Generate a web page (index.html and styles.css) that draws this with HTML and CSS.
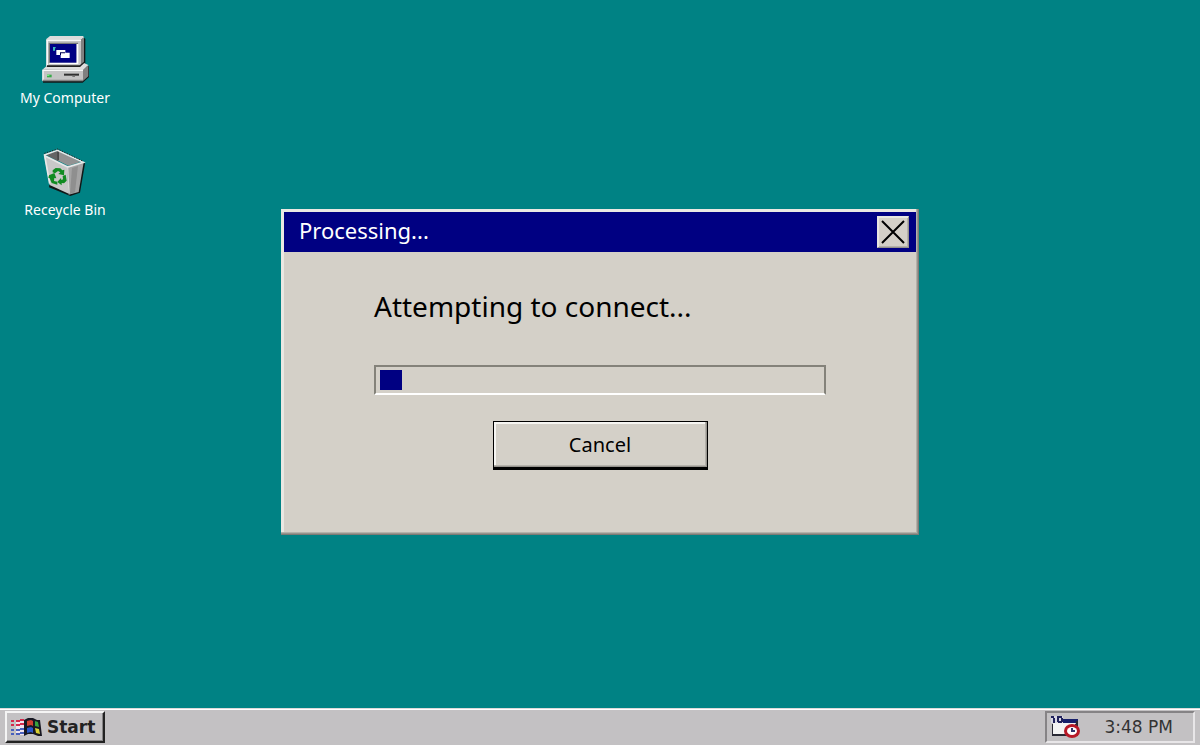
FILE: index.html
```html
<!DOCTYPE html>
<html lang="en">
<head>
  <meta charset="utf-8">
  <meta name="viewport" content="width=device-width, initial-scale=1">
  <title>Desktop</title>
  <link rel="stylesheet" href="styles.css">
</head>
<body>
  <main class="desktop">
    <!-- shortcuts -->
    <nav class="shortcuts">
      <a href="#computer" class="shortcut">
        <svg class="shortcut-icon" viewBox="90 33 150 150" aria-hidden="true">
          <path fill="#101818" d="M216 36l10 5v80l11 3v32l-19 17H99v-4l10-46z"/>
          <path fill="#808080" d="M209 47l13-10v77l-13 12zM219 134l16-13v33l-16 14z"/>
          <path fill="#dcdcdc" d="M109 42l11-9h99l3 4-13 10H109z"/>
          <path fill="#c6c6c6" d="M109 44h104v80H109z"/>
          <path fill="#f8f8f8" d="M109 44h104v4h-99v76h-5z"/>
          <path fill="#777" d="M116 53h88v4h-84v58h-4z"/>
          <path fill="#fff" d="M200 57h5v60h-87v-4h82z"/>
          <path fill="#000084" d="M120 57h79v56h-79z"/>
          <path fill="#38b9bc" d="M129 66h8v4h-2v7h-6z"/>
          <path fill="#fff" d="M139 75h27v8h13v16h-27v-9h-13z"/>
          <path fill="#000050" d="M150 82h15v3h-12v5h-3z"/>
          <path fill="#6f6f6f" d="M109 123h100l12-10v8l-10 9H109z"/>
          <path fill="#ddd" d="M97 134l12-10h100l13-10 13 6-16 15z"/>
          <path fill="#222" d="M111 121h98l13-11v5l-12 11h-99z"/>
          <path fill="#c4c4c4" d="M97 134h122v34H97z"/>
          <path fill="#f7f7f7" d="M97 134h122v4H101v30h-4z"/>
          <path fill="#848484" d="M99 164h120v5H97z"/>
          <path fill="#38aa48" d="M111 149h14v8h-14z"/>
          <path fill="#74ef83" d="M111 149h7v4h-7z"/>
          <path fill="#303030" d="M162 146h45v6h-45z"/>
          <path fill="#777" d="M187 152h8v4h-8z"/>
        </svg>
        <span>My Computer</span>
      </a>
      <a href="#bin" class="shortcut">
        <svg class="shortcut-icon" viewBox="92 24 150 150" aria-hidden="true">
          <path fill="#101818" d="M224 66l3 5-15 87-29 10-64-26 1-8 66 20z"/>
          <path fill="#c8c8c8" d="M104 44l69 38 5 79-57-26z"/>
          <path fill="#a4a4a4" d="M173 82l50-15-15 89-30 8z"/>
          <path fill="#8f8f8f" d="M188 84l18-6-9 79-15 5z"/>
          <path fill="#656565" d="M109 44l35-11 5 31-6-2z"/>
          <path fill="#929292" d="M145 32l69 34-37 11-30-15z"/>
          <path fill="#4a4a4a" d="M143 31h6v29l-5 2z"/>
          <path fill="none" stroke="#e8e8e8" stroke-width="5" d="M105 45l39-14 78 36-47 14-69-34 15 84"/>
          <path fill="none" stroke="#252525" stroke-width="3" stroke-dasharray="4 4" d="M105 40l40-13 77 37"/>
          <path fill="none" stroke="#d5d5d5" stroke-width="4" d="M175 84l4 76"/>
          <g fill="#108b22">
            <path d="M130 91l9-7 14 1 6 6 6-2-1 17-17-4 6-5-7-4-9 7-7-3z"/>
            <path d="M119 106l16-7 6 16-6-1-1 9 10 2v9l-17-5-6-14-4-2z"/>
            <path d="M160 108l9-4 3 18-8 8-7-1v7l-13-10 11-12 1 6 5-2z"/>
          </g>
        </svg>
        <span>Receycle Bin</span>
      </a>
    </nav>

    <!-- connection dialog -->
    <section class="window" role="dialog" aria-labelledby="windowTitle">
      <header class="title-bar">
        <h1 class="title" id="windowTitle">Processing...</h1>
        <button class="close-button" type="button" aria-label="Close">
          <svg viewBox="0 0 24 24" aria-hidden="true">
            <path d="M1 1l22 22M23 1L1 23" stroke="#000" stroke-width="2"/>
          </svg>
        </button>
      </header>
      <div class="window-body">
        <label class="message" for="progress">Attempting to connect...</label>
        <progress class="progress" id="progress" value="5" max="100"></progress>
        <button class="cancel-button" type="button">Cancel</button>
      </div>
    </section>
  </main>

  <!-- taskbar -->
  <footer class="taskbar">
    <button class="start-button" type="button">
      <svg class="start-icon" viewBox="0 0 32 20" aria-hidden="true">
        <path fill="#f0e4ee" d="M5 3h9v15H5z"/>
        <g fill="#d5284a">
          <path d="M0 3h3v2H0zM0 7h3v2H0zM5 3h4v2H5zM9 2h4v2H9zM5 7h4v2H5zM9 6h4v2H9z"/>
        </g>
        <g fill="#4860bd">
          <path d="M0 12h3v2H0zM0 16h3v2H0zM5 12h4v2H5zM9 11h4v2H9zM5 16h4v2H5zM9 15h4v2H9z"/>
        </g>
        <path fill="#171722" d="M13 3l4-2h5l4 2h3l2 16h-4l-5-2h-5l-4 2z"/>
        <path fill="#d04030" d="M16 4l4-1 2 1v5l-2-1-4 1z"/>
        <path fill="#37a33d" d="M24 4l3 1 1 5-4-1z"/>
        <path fill="#2855c8" d="M16 11l4-1 2 1v5l-2-1-4 1z"/>
        <path fill="#d8d034" d="M24 11l4 1 1 5-4-1z"/>
      </svg>
      Start
    </button>
    <div class="tray">
      <svg class="tray-icon" viewBox="0 0 32 24" aria-hidden="true">
        <path fill="#292934" d="M2 9h26v12H2z"/>
        <path fill="#f4f4f4" d="M3 8h22v11H3z"/>
        <path fill="#d8d8e4" d="M1 1h12v7H1z"/>
        <path fill="#22225c" d="M1 1h3v2H1zM3 3h2v5H3zM7 1h5v2H7zM7 3h2v4H7zM11 3h2v4h-2zM8 6h4v2H8z"/>
        <path fill="#17206b" d="M13 4h15v4H13z"/>
        <path fill="#292934" d="M26 6h2v5h-2z"/>
        <ellipse cx="22" cy="16" rx="8" ry="7" fill="#b71927"/>
        <ellipse cx="22" cy="16" rx="5" ry="4" fill="#fff"/>
        <path fill="none" stroke="#35356b" stroke-width="2" d="M22 13v3h3"/>
      </svg>
      <time class="clock" datetime="15:48">3:48 PM</time>
    </div>
  </footer>
</body>
</html>
```

FILE: styles.css
```css
* {
  margin: 0;
  padding: 0;
  box-sizing: border-box;
}

body {
  display: grid;
  grid-template-rows: 1fr auto;
  min-height: 100vh;
  background-color: #008284;
  font-family: "Noto Sans", sans-serif;
}

button {
  font: inherit;
  color: #000;
  cursor: pointer;
}

svg {
  display: block;
}

/* shortcuts share the grid cell with the window */
.desktop {
  display: grid;
  padding-top: 36px;
}

.shortcuts,
.window {
  grid-area: 1 / 1;
}

.shortcuts {
  display: flex;
  flex-direction: column;
  justify-self: start;
  gap: 40px;
  width: 130px;
}

.shortcut {
  display: flex;
  flex-direction: column;
  align-items: center;
  gap: 2px;
  color: #fff;
  font-size: 14px;
  line-height: 20px;
  text-decoration: none;
}

.shortcut-icon {
  width: 50px;
  height: 50px;
}

/* window, the bevel is drawn over the padding */
.window {
  place-self: center;
  width: 90%;
  max-width: 638px;
  padding: 3px;
  background-color: #d4d0c8;
  box-shadow:
    inset -1px -1px #7c7b76,
    inset -2px -2px #96938d,
    inset -3px -3px #b4b1aa,
    inset 3px 3px #eae8e3;
}

.title-bar {
  display: flex;
  align-items: center;
  justify-content: space-between;
  height: 40px;
  padding: 0 7px 0 15px;
  background-color: #000082;
  color: #fff;
}

.title {
  padding-bottom: 4px;
  font-size: 22px;
  font-weight: 400;
  line-height: 36px;
}

.close-button {
  width: 32px;
  height: 32px;
  padding: 3px;
  background-color: #d4d0c8;
  border: 1px solid #e8e6e1;
  border-right-color: #96938d;
  border-bottom-color: #96938d;
  box-shadow: inset 1px 1px #e8e6e1, inset -1px -1px #b4b1aa;
}

.window-body {
  display: flex;
  flex-direction: column;
  align-items: center;
  padding: 34px 90px 62px;
}

.message {
  align-self: flex-start;
  margin-bottom: 39px;
  font-size: 28px;
  line-height: 40px;
}

.progress {
  width: 100%;
  height: 30px;
  margin-bottom: 26px;
  padding: 3px 4px;
  appearance: none;
  background-color: #d4d0c8;
  border: 2px solid #84827a;
  border-bottom-color: #fff;
}

.progress::-webkit-progress-bar {
  background-color: transparent;
}

.progress::-webkit-progress-value {
  background-color: #000082;
}

.cancel-button {
  width: 215px;
  height: 49px;
  background-color: #d4d0c8;
  border: 1px solid #000;
  border-bottom-width: 3px;
  box-shadow:
    inset -1px -1px #96938d,
    inset -2px -2px #b4b1aa,
    inset 2px 2px #f6f5f2;
  font-size: 20px;
  line-height: 24px;
}

/* taskbar */
.taskbar {
  display: flex;
  align-items: center;
  justify-content: space-between;
  height: 37px;
  padding: 1px 5px 2px;
  background-color: #c3c1c3;
  border-top: 1px solid #dcdada;
  box-shadow: inset 0 1px #fff;
  font-family: "DejaVu Sans", sans-serif;
  font-size: 17px;
}

.start-button {
  display: flex;
  align-items: center;
  gap: 4px;
  height: 32px;
  padding: 0 8px 0 4px;
  background-color: #c3c1c3;
  border: 2px solid #f4f4f4;
  border-right-color: #222;
  border-bottom-color: #222;
  box-shadow: inset -1px -1px #858385;
  color: #222;
  font-weight: 700;
}

.start-icon {
  width: 32px;
  height: 20px;
}

.tray {
  display: flex;
  align-items: center;
  justify-content: space-between;
  width: 150px;
  height: 32px;
  padding: 0 20px 0 3px;
  border: 2px solid #858385;
  border-right-color: #e8e6e8;
  border-bottom-color: #e8e6e8;
}

.tray-icon {
  width: 32px;
  height: 24px;
}

.clock {
  color: #333;
}
```
